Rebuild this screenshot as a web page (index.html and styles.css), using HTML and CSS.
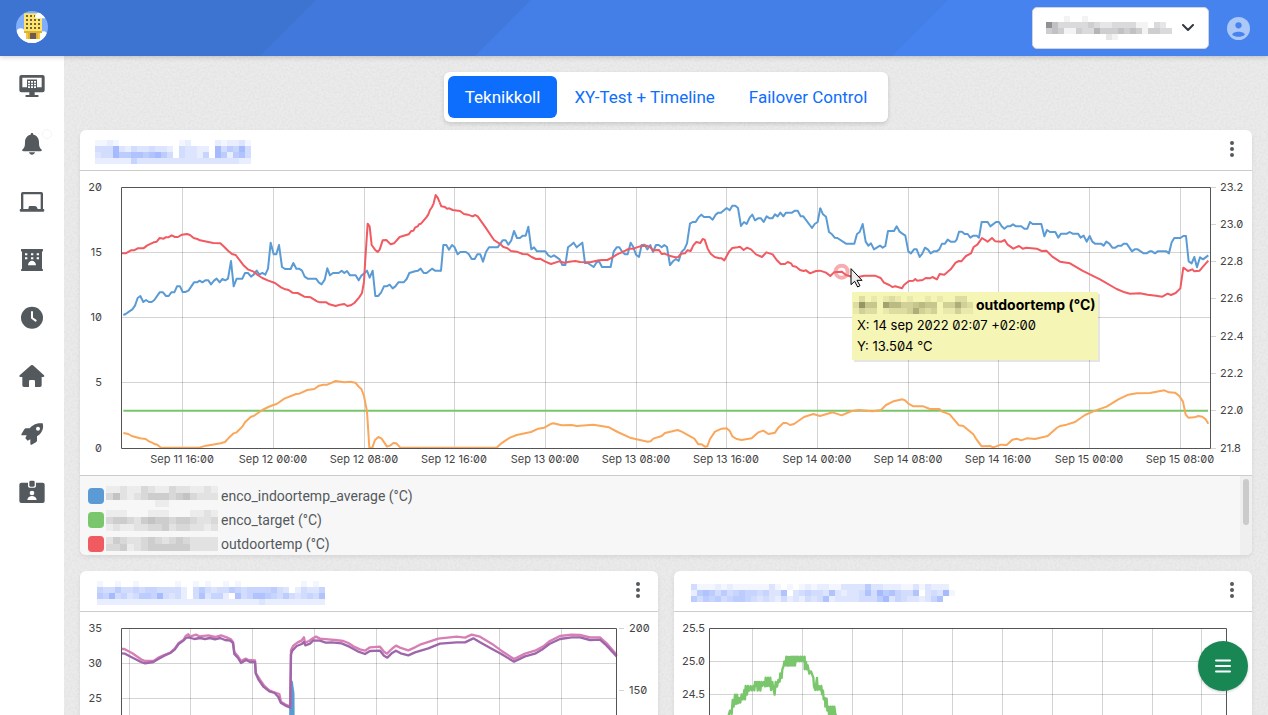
FILE: index.html
```html
<!DOCTYPE html>
<html lang="en">
<head>
<meta charset="utf-8">
<meta name="viewport" content="width=device-width, initial-scale=1">
<title>Teknikkoll</title>
<link rel="stylesheet" href="styles.css">
<script src="script.js" defer></script>
</head>
<body>
<div class="app">
  <header class="topbar">
    <a class="logo" href="#" aria-label="Home">
      <svg viewBox="48 33 96 96"><defs><clipPath id="disc"><circle cx="96" cy="81" r="48"/></clipPath></defs>
        <g clip-path="url(#disc)"><path fill="#80aefb" d="M48 33h96v96H48z"/>
        <g fill="#fff"><circle cx="62" cy="98" r="13"/><circle cx="130" cy="108" r="14"/><circle cx="75" cy="116" r="18"/><circle cx="111" cy="122" r="16"/><path d="M54 106h84v23H54z"/></g>
        <path fill="#ffe566" d="M72 40h54v54H72z"/><path fill="#dfb235" d="M72 93h54v6H72z"/><path fill="#f2c84b" d="M78 99h42v18H78z"/><path fill="#dfb235" d="M84 99h6v18h-6zM108 99h6v18h-6z"/><path fill="#6e5b4c" d="M90 99h18v18H90z"/>
        <path fill="#6b6250" d="M78 45h6v6h-6zM90 45h6v6h-6zM102 45h6v6h-6zM78 57h6v6h-6zM90 57h6v6h-6zM102 57h6v6h-6zM114 57h6v6h-6zM78 69h6v6h-6zM90 69h6v6h-6zM102 69h6v6h-6zM114 69h6v6h-6zM78 81h6v6h-6zM90 81h6v6h-6zM102 81h6v6h-6zM114 81h6v6h-6z"/>
        <path fill="#fff" d="M108 55c-5-4-4-11 2-12l3-5h24v17z"/></g></svg>
    </a>
    <div class="topbar-tools">
      <div class="site-picker">
        <select aria-label="Site"><option></option></select>
        <svg class="mosaic" data-size="6" data-ink="30,30,40" data-rows="000100100000000000000|953333343223333110320|454114336444545414433|000000000021000000000"></svg>
        <svg class="chevron" viewBox="0 0 12 8"><path d="M1 1l5 5 5-5"/></svg>
      </div>
      <button class="account" type="button" aria-label="Account"><svg viewBox="0 0 22 22"><circle class="account-disc" cx="11" cy="11" r="11"/><circle cx="11" cy="8" r="3"/><path d="M5 17c0-4 12-4 12 0-3 2.600-9 2.600-12 0z"/></svg></button>
    </div>
  </header>
  <div class="shell">
    <nav class="sidebar" aria-label="Main">
      <a href="#" aria-label="Overview"><svg viewBox="57 219 78 78"><path fill-rule="evenodd" d="M64 225h64q6 0 6 6v40q0 6-6 6h-24v8h9q3 0 3 3t-3 3H79q-3 0-3-3t3-3h9v-8H64q-6 0-6-6v-40q0-6 6-6zm3 8v29h14v-23h30v23h14v-29z"/><path d="M81 239h30v28H81z"/><path fill="#fff" d="M84 243h6v5h-6zM93 243h6v5h-6zM102 243h6v5h-6zM84 251h6v5h-6zM93 251h6v5h-6zM102 251h6v5h-6zM84 259h6v5h-6zM93 259h6v5h-6zM102 259h6v5h-6z"/></svg></a>
      <a href="#" aria-label="Alarms"><svg viewBox="57 390 78 78"><path d="M96 396c3 0 4 2 4 5 10 2 17 10 17 22 0 14 2 17 7 22 3 4 1 6-3 6H71c-4 0-6-2-3-6 5-5 7-8 7-22 0-12 7-20 17-22 0-3 1-5 4-5zM87 454h18c-1 4-5 7-9 7s-8-3-9-7z"/></svg><span class="dot"></span></a>
      <a href="#" aria-label="Devices"><svg viewBox="57 567 78 78"><path fill-rule="evenodd" d="M68 576h56q5 0 5 5v46H63v-46q0-5 5-5zm2 7v44h52v-44z"/><path d="M88 618h16q7 0 9 9h17q3 0 3 4t-3 4H62q-3 0-3-4t3-4h23q1-9 3-9z"/></svg></a>
      <a href="#" aria-label="Buildings"><svg viewBox="57 81 78 78"><path d="M63 88q0-1 2-1h62q2 0 2 2v3q0 2-3 3v51q3 1 3 3v2q0 2-2 2H65q-2 0-2-2v-2q0-2 3-3V95q-3-1-3-3z"/><path fill="#fff" d="M75 100h7v6h-7zM93 100h7v6h-7zM110 100h7v6h-7zM75 112h7v6h-7zM93 112h7v6h-7zM110 112h7v6h-7zM84 136c1-18 23-18 24 0z"/></svg></a>
      <a href="#" aria-label="History"><svg viewBox="57 255 78 78"><circle cx="96" cy="293" r="33"/><path class="cut" d="M96 276v18l11 8"/></svg></a>
      <a href="#" aria-label="Home page"><svg viewBox="57 432 78 78"><path d="M93 439q3-2 6 0l33 30q3 5-3 5h-4v25q0 5-5 5h-15v-17q0-4-4-4H91q-4 0-4 4v17H72q-5 0-5-5v-25h-5q-6 0-3-5z"/></svg></a>
      <a href="#" aria-label="Launch"><svg viewBox="57 605 78 78"><path fill-rule="evenodd" d="M100 618c8-6 18-7 28-6 3 10 1 20-5 28-3 4-7 8-12 11v13c0 3-10 9-16 12-3 1-4 0-4-3v-13l-8 4-7-7 4-9H67c-3 0-4-2-2-5l7-12c2-3 5-4 8-4h9c3-4 7-7 11-9zm14 4a6 6 0 100 12 6 6 0 000-12z"/></svg></a>
      <a href="#" aria-label="Contacts"><svg viewBox="57 782 78 78"><path d="M64 793h64q6 0 6 6v49q0 6-6 6H64q-6 0-6-6v-49q0-6 6-6z"/><path fill="#fff" d="M84 790h24v13q0 5-5 5H89q-5 0-5-5z"/><rect x="88" y="787" width="16" height="18" rx="4"/><circle fill="#fff" cx="96" cy="824" r="7"/><path fill="#fff" d="M82 845c1-16 27-16 28 0z"/></svg></a>
    </nav>
    <main class="content">
      <div class="tabs" role="tablist">
        <button class="tab active" role="tab" type="button" aria-selected="true">Teknikkoll</button>
        <button class="tab" role="tab" type="button">XY-Test + Timeline</button>
        <button class="tab" role="tab" type="button">Failover Control</button>
      </div>
      <section class="card">
        <div class="card-head">
          <svg class="mosaic" data-size="6" data-ink="50,100,250" data-rows="11210000000000120000212231|44483243343320433220846584|34486677678640433250862674|22222253333333333333333322"></svg>
          <button class="more" type="button" aria-label="Chart menu"><svg viewBox="0 0 4 16"><circle cx="2" cy="2" r="2"/><circle cx="2" cy="8" r="2"/><circle cx="2" cy="14" r="2"/></svg></button>
        </div>
        <div class="chart">
          <svg class="plot" viewBox="0 0 1172 304">
            <path class="grid" d="M42 81.500H1130M42 146.500H1130M42 211.500H1130M102.500 16V277M193.500 16V277M284.500 16V277M374.500 16V277M465.500 16V277M556.500 16V277M646.500 16V277M737.500 16V277M828.500 16V277M918.500 16V277M1009.500 16V277M1100.500 16V277M1131 16.500h5M1131 53.500h5M1131 90.500h5M1131 127.500h5M1131 165.500h5M1131 202.500h5M1131 239.500h5M1131 277.500h5"/>
            <g class="series" transform="translate(0 9) scale(.33333)">
              <path class="blue" d="M130 405L137 402 148 394 157 388 165 377 173 354 181 348 190 366 198 360 207 366 215 366 223 360 239 337 249 337 258 348 266 348 274 337 283 337 291 319 300 319 308 336 317 336 326 331 342 307 351 307 359 302 367 307 376 301 385 301 393 313 402 302 410 296 419 307 427 297 436 301 444 296 453 243 461 319 470 296 487 296 495 279 504 279 513 290 521 284 530 272 538 284 547 279 556 284 564 266 572 188 581 223 589 223 597 195 606 261 615 267 632 267 640 249 649 266 657 266 666 272 674 290 683 296 708 296 717 308 725 313 734 299 742 265 750 286 759 279 776 279 785 272 793 279 801 273 810 286 827 286 836 301 844 287 852 281 861 272 869 293 878 272 886 348 895 348 903 338 912 319 920 319 929 314 938 325 946 319 955 307 971 307 980 297 988 279 1005 274 1014 272 1022 266 1031 279 1040 279 1056 266 1065 272 1082 272"/>
              <path class="blue" transform="translate(1080 0)" d="M0 272L3 272 10 195 19 195 27 209 36 195 44 202 53 223 61 216 78 216 86 222 95 237 104 237 112 223 121 223 129 245 138 216 147 202 173 202 188 181 197 181 205 194 214 181 222 153 231 174 240 174 248 167 257 167 265 140 274 208 282 202 291 214 316 214 325 226 333 231 342 226 359 238 367 255 376 255 384 202 393 195 401 188 410 202 427 188 435 249 443 249 461 261 469 248 477 244 486 261 512 261 521 215 530 202 538 202 547 216 555 223 563 223 572 188 580 201 588 224 597 231 605 195 614 194 622 208 631 195 639 216 648 195 656 195 665 202 673 195 681 201 690 255 699 244 708 237 716 243 725 215 733 208 741 190 750 131 758 126 767 126 775 113 784 104 792 111 809 111 818 119 827 104 835 98 843 98 860 84 869 91 877 77 886 77 894 84 903 138 912 126 920 132 929 113 937 104 945 121 954 115 963 115 971 126 980 109 989 115 997 115 1005 103 1013 109 1021 98 1030 109 1038 98 1056 98 1065 92 1073 92 1082 109 1090 109 1116 144 1124 132 1133 126 1141 84"/>
              <path class="blue" transform="translate(2220 0)" d="M0 83L9 103 18 110 27 156 36 163 44 173 52 174 78 191 103 191 111 162 119 156 128 132 137 185 145 197 153 190 162 208 180 197 188 203 196 198 204 153 222 153 230 139 239 155 247 161 256 167 265 214 273 220 282 208 290 208 299 231 307 221 315 203 324 209 332 220 341 214 350 214 358 208 366 191 375 191 383 179 392 185 405 185 410 179 417 155 426 155 434 162 443 162 451 173 460 167 470 167 477 173 485 126 503 126 511 139 528 126 537 126 545 139 553 146 562 139 570 139 579 133 588 139 604 139 613 146 622 146 630 126 638 132 664 132 673 169 681 150 690 156 706 156 715 173 723 161 741 161 749 156 758 161 774 161 782 173 791 167 800 185 809 168 817 185 825 191 843 191 851 197 859 185 868 191 877 203 886 203 895 197 904 197 911 191 920 191 936 214 944 208 953 208 971 220 980 220 989 214 996 214 1005 220 1013 214 1039 214 1047 220 1055 187 1063 174 1081 174 1090 168 1098 168 1106 244 1115 250 1123 231 1131 262 1140 232 1149 238 1165 226"/>
              <path class="green" d="M130 692H3384"/>
              <path class="red" d="M125 220L137 220 153 211 162 211 173 205 190 205 202 196 221 187 230 185 239 174 251 176 257 172 265 172 275 166 285 171 294 171 306 164 321 162 330 165 341 174 352 177 360 181 385 186 400 189 421 190 433 201 445 213 456 222 467 225 480 242 489 254 505 269 521 275 533 285 547 294 565 302 585 309 603 322 616 328 626 330 637 338 653 339 673 350 692 352 711 364 720 367 739 367 748 373 767 378 780 374 793 372 802 378 812 376 823 369 837 353 846 339 852 305 856 237 863 131 869 140 875 195 885 209 893 216 899 209 908 181 919 180 932 193 942 190 959 171 986 163 994 153 1000 152 1006 142 1013 139 1018 132 1023 131 1039 112 1045 103 1050 90 1056 81 1061 70 1067 45 1073 53 1079 67"/>
              <path class="red" transform="translate(1080 0)" d="M-1 67L4 79 15 81 21 86 28 85 38 90 60 93 72 102 84 104 98 109 106 105 113 109 137 143 162 180 182 193 190 201 201 204 213 213 230 215 248 222 263 223 275 231 288 237 300 236 316 245 333 252 357 244 373 248 388 245 406 243 420 246 450 247 477 241 492 240 502 240 516 233 530 224 556 212 567 206 580 206 600 199 619 197 629 200 639 211 657 210 665 222 673 221 688 227 706 232 715 231 723 221 735 220 742 211 752 213 760 196 769 186 781 189 788 177 794 179 803 206 812 221 824 231 838 235 845 235 853 241 859 230 867 215 877 204 893 202 900 200 911 210 921 203 933 208 948 223 966 231 979 217 998 223 1010 240 1022 252 1035 252 1043 246 1053 250 1058 258 1068 260 1080 270 1091 273 1098 271 1110 280 1128 273 1140 272"/>
              <path class="red" transform="translate(2220 0)" d="M0 272L18 278 31 288 42 277 65 275 78 285 95 290 110 292 133 287 165 287 182 294 192 308 208 315 217 321 226 319 246 325 252 315 267 303 280 302 286 297 291 302 308 300 317 294 330 295 337 291 351 298 359 282 373 284 392 268 407 248 417 243 424 244 438 228 453 220 461 201 472 194 479 184 486 174 503 185 516 174 526 184 544 185 554 180 563 194 580 206 597 198 608 206 619 203 650 206 665 213 679 212 697 230 720 245 750 250 787 272 840 298 890 327 914 337 930 341 960 340 983 344 1008 347 1027 350 1043 341 1053 345 1067 339 1081 325 1090 263 1104 273 1117 268 1123 274 1139 272 1149 260 1165 242"/>
              <path class="orange" d="M130 759L145 762 155 768 180 775 197 777 207 784 215 787 223 792 232 794 243 803 358 803 378 797 397 794 422 790 435 786 445 775 461 760 470 757 487 740 495 727 513 710 521 708 547 690 565 681 580 675 590 672 613 656 648 642 658 641 682 630 703 627 717 617 730 614 742 614 767 603 793 607 812 605 826 608 837 621 844 627 852 648 861 694 868 803 877 803 885 780 895 771 905 776 921 800 930 797 940 789 949 790 961 803 1250 803 1264 790 1277 781 1290 773 1310 765 1353 756 1375 746 1393 743 1414 731 1420 730 1445 736 1475 735 1490 738 1540 734 1587 742 1613 756 1650 773 1703 785 1712 784 1720 776 1745 768 1755 759 1793 750 1805 755 1843 776 1855 793 1865 793 1875 800 1882 799 1890 777 1905 755 1925 746 1940 745 1950 754 1957 769 1970 777 1985 780 2015 775 2035 757 2050 752 2065 762 2085 758 2095 743 2110 729 2120 729 2130 735 2142 732 2172 711 2200 702 2220 708 2258 697 2285 706 2315 693 2337 690 2377 694 2403 690 2418 675 2440 664 2468 658 2475 661 2485 671 2500 679 2530 679 2550 687 2578 687 2585 694 2609 703 2637 736 2650 738 2680 763 2690 779 2705 799 2730 798 2740 802 2763 794 2780 795 2797 779 2810 776 2824 781 2840 775 2865 777 2903 768 2930 744 2940 738 2960 734 2985 726 3015 705 3045 692 3080 680 3115 658 3145 644 3170 640 3210 639 3253 631 3267 637 3285 638 3298 648 3309 665 3317 704 3325 713 3343 712 3355 708 3367 710 3377 718 3385 731"/>
              <circle class="hover-ring" cx="2285" cy="275" r="18"/>
            </g>
            <path class="frame" d="M41.500 16.500H1130.500V277.500H41.500z"/>
            <g class="axis" text-anchor="end"><text x="22" y="20">20</text><text x="22" y="85">15</text><text x="22" y="150">10</text><text x="22" y="215">5</text><text x="22" y="281">0</text></g>
            <g class="axis"><text x="1140" y="20">23.2</text><text x="1140" y="57">23.0</text><text x="1140" y="94">22.8</text><text x="1140" y="131">22.6</text><text x="1140" y="169">22.4</text><text x="1140" y="206">22.2</text><text x="1140" y="243">22.0</text><text x="1140" y="281">21.8</text></g>
            <g class="axis" text-anchor="middle"><text x="102" y="292">Sep 11 16:00</text><text x="193" y="292">Sep 12 00:00</text><text x="284" y="292">Sep 12 08:00</text><text x="374" y="292">Sep 12 16:00</text><text x="465" y="292">Sep 13 00:00</text><text x="556" y="292">Sep 13 08:00</text><text x="646" y="292">Sep 13 16:00</text><text x="737" y="292">Sep 14 00:00</text><text x="828" y="292">Sep 14 08:00</text><text x="918" y="292">Sep 14 16:00</text><text x="1009" y="292">Sep 15 00:00</text><text x="1100" y="292">Sep 15 08:00</text></g>
          </svg>
          <div class="tooltip">
            <div class="tooltip-name"><svg class="mosaic" data-size="6" data-ink="30,30,0" data-rows="02010121010010100220|28440755334544033632|13220122236323011311"></svg><strong>outdoortemp (°C)</strong></div>
            <div>X: 14 sep 2022 02:07 +02:00</div>
            <div>Y: 13.504 °C</div>
          </div>
          <svg class="pointer" viewBox="91 261 39 63"><path d="M94 266v48l11-10 9 17 7-4-9-16h15z"/></svg>
        </div>
        <ul class="legend">
          <li><span class="swatch swatch-blue"></span><svg class="mosaic" data-size="7" data-ink="60,60,60" data-rows="1121132113221121|3521234443453222|0000000110000000"></svg>enco_indoortemp_average (°C)</li>
          <li><span class="swatch swatch-green"></span><svg class="mosaic" data-size="7" data-ink="60,60,60" data-rows="1110001110001121|3443245443443223|1211223342332212"></svg>enco_target (°C)</li>
          <li><span class="swatch swatch-red"></span><svg class="mosaic" data-size="7" data-ink="60,60,60" data-rows="2432234323432222|3341234444442222"></svg>outdoortemp (°C)</li>
        </ul>
      </section>
      <div class="card-row">
        <section class="card">
          <div class="card-head">
            <svg class="mosaic" data-size="6" data-ink="50,100,250" data-rows="10010010000001001010010100000000001010|54464454554444204643446545555643024335|65845346658434204735520745776546434547|22222222222222222222222222232222222222"></svg>
            <button class="more" type="button" aria-label="Chart menu"><svg viewBox="0 0 4 16"><circle cx="2" cy="2" r="2"/><circle cx="2" cy="8" r="2"/><circle cx="2" cy="14" r="2"/></svg></button>
          </div>
          <div class="chart">
            <svg class="plot" viewBox="0 0 578 200">
              <path class="grid" d="M42 51.500H536M42 86.500H536M42 121.500H536M42 156.500H536M49.500 16V184M110.500 16V184M172.500 16V184M234.500 16V184M296.500 16V184M357.500 16V184M419.500 16V184M481.500 16V184M539 16.500h5M539 78.500h5"/>
              <g class="series thick" transform="translate(0 -2) scale(.33333)">
                <path class="bar" d="M631 600V290L635 215 640 250 642 600z"/>
                <path class="pink" d="M125 117L133 117 157 130 183 148 195 153 222 152 237 142 252 135 271 128 284 116 296 99 311 89 318 77 325 73 330 80 348 74 358 79 385 76 405 81 423 76 440 82 453 88 459 96 463 126 474 139 483 153 497 146 505 150 525 151 528 190 540 209 553 228 568 241 577 245 598 252 603 275 615 283 630 290 633 120 640 107 652 98 664 92 672 82 675 98 687 93 700 84 708 80 720 86 744 88 765 90 790 93 805 99 820 109 840 118 855 122 870 112 900 110 912 125 921 131 935 117 948 107 960 113 985 121 1005 112 1020 104 1048 95 1075 86 1130 80 1155 83 1175 74 1200 80 1235 101 1264 122 1302 147 1335 131 1365 122 1390 109 1408 94 1440 78 1475 74 1500 75 1530 82 1560 82 1580 100 1610 134"/>
                <path class="purple" d="M125 130L135 131 158 143 183 156 195 160 220 156 235 147 253 137 271 129 284 119 296 102 310 92 318 84 325 82 343 87 360 84 375 87 390 84 405 88 420 84 435 90 451 92 459 99 463 132 474 144 483 159 498 150 510 156 525 156 527 190 535 208 550 230 568 244 584 249 595 261 602 278 615 286 631 293 633 133 637 122 650 108 665 102 672 96 676 106 690 101 700 91 720 92 737 98 755 97 785 100 808 110 833 124 855 132 870 123 900 122 912 137 922 143 935 130 948 122 962 130 985 136 1005 127 1045 115 1080 101 1130 97 1155 97 1180 85 1200 97 1235 116 1264 132 1302 155 1335 139 1365 131 1390 116 1408 102 1440 87 1475 82 1500 82 1530 90 1560 89 1580 107 1610 139"/>
              </g>
              <path class="frame" d="M41.500 16.500H536.500V184.500H41.500z"/>
              <g class="axis" text-anchor="end"><text x="22" y="20">35</text><text x="22" y="55">30</text><text x="22" y="90">25</text></g>
              <g class="axis"><text x="549" y="20">200</text><text x="549" y="82">150</text></g>
            </svg>
          </div>
        </section>
        <section class="card">
          <div class="card-head">
            <svg class="mosaic" data-size="6" data-ink="50,100,250" data-rows="41112121111113101012122113333633222113132220|26764645655453370345443732334748675447034381|64656456654343242324347233334446835433235700"></svg>
            <button class="more" type="button" aria-label="Chart menu"><svg viewBox="0 0 4 16"><circle cx="2" cy="2" r="2"/><circle cx="2" cy="8" r="2"/><circle cx="2" cy="14" r="2"/></svg></button>
          </div>
          <div class="chart">
            <svg class="plot" viewBox="0 0 578 200">
              <path class="grid" d="M36 49.500H552M36 82.500H552M36 115.500H552M36 148.500H552M78.500 16V184M128.500 16V184M178.500 16V184M228.500 16V184M278.500 16V184M328.500 16V184M378.500 16V184M428.500 16V184M478.500 16V184M527.500 16V184"/>
              <g class="series thick" transform="translate(-34 -52) scale(.33333)">
                <path class="green" d="M245 620L262 480 267 462 270 452 275 462 278 420 281 440 285 404 288 432 291 404 294 430 297 414 301 428 305 403 309 418 313 390 315 418 317 378 321 404 324 378 328 392 332 378 336 391 340 378 343 391 345 366 348 378 351 366 353 392 357 366 361 392 364 366 366 378 371 366 375 379 377 353 381 378 384 353 388 378 391 353 393 390 397 366 401 390 404 404 407 366 411 380 415 360 419 365 421 340 425 354 427 328 431 318 433 304 437 316 439 290 442 317 445 291 447 317 450 291 453 317 456 290 459 317 462 290 465 317 468 290 471 304 474 290 478 304 481 290 484 304 487 290 491 304 494 290 494 328 498 306 501 328 503 316 508 341 513 334 520 353 522 380 526 390 531 354 533 390 537 378 541 390 544 378 546 403 549 392 551 418 555 414 556 440 560 416 562 452 565 440 567 463 571 440 573 464 577 440 580 464 583 440 586 463 600 480 640 600"/>
              </g>
              <path class="frame" d="M35.500 16.500H552.500V184.500H35.500z"/>
              <g class="axis" text-anchor="end"><text x="31" y="20">25.5</text><text x="31" y="53">25.0</text><text x="31" y="86">24.5</text></g>
            </svg>
          </div>
        </section>
      </div>
    </main>
  </div>
  <button class="fab" type="button" aria-label="Menu"><svg viewBox="0 0 16 14"><path d="M1 1.500h14M1 7h14M1 12.500h14"/></svg></button>
</div>
</body>
</html>
```
FILE: styles.css
```css
* { box-sizing: border-box; }
body {
  margin: 0;
  font-family: Inter, "Noto Sans", sans-serif;
  font-feature-settings: "zero";
  font-size: 14px;
  color: #444;
}
button { border: 0; padding: 0; background: none; font: inherit; font-feature-settings: inherit; cursor: pointer; }
svg { display: block; }
.app { display: flex; flex-direction: column; height: 100vh; }

.topbar {
  position: relative;
  z-index: 2;
  flex: none;
  display: flex;
  align-items: center;
  justify-content: space-between;
  height: 56px;
  padding: 0 18px 0 16px;
  background: linear-gradient(135deg, #3d74d1 223px, #4078dc 224px, #4078dc 375px, #447fe8 376px, #447fe8 670px, #4783ee 671px);
  box-shadow: 0 1px 5px rgba(0, 0, 0, .2);
}
.logo { padding-bottom: 2px; }
.logo svg { width: 32px; height: 32px; }
.topbar-tools { display: flex; align-items: center; gap: 18px; }
.site-picker { position: relative; }
.site-picker select {
  display: block;
  appearance: none;
  width: 177px;
  height: 42px;
  border: 1px solid #ced4da;
  border-radius: 5px;
  background: #fff;
}
.site-picker svg { position: absolute; pointer-events: none; }
.site-picker .mosaic { left: 14px; top: 9px; }
.chevron { right: 15px; top: 17px; width: 12px; height: 8px; fill: none; stroke: #343a40; stroke-width: 2; stroke-linecap: round; stroke-linejoin: round; }
.account svg { width: 23px; height: 23px; fill: #4783ee; }
.account-disc { fill: #acc8f8; }

.shell { flex: 1; display: flex; min-height: 0; }
.sidebar { flex: none; width: 64px; padding-top: 1px; background: #fff; }
.sidebar a { position: relative; display: flex; align-items: center; justify-content: center; height: 58px; }
.sidebar svg { width: 26px; height: 26px; fill: #54595d; }
.sidebar .cut { fill: none; stroke: #fff; stroke-width: 6; stroke-linecap: round; stroke-linejoin: round; }
.dot { position: absolute; right: 12px; top: 14px; width: 10px; height: 10px; border: 1px solid #f5f5f5; border-radius: 50%; }

.content {
  flex: 1;
  min-width: 0;
  display: flex;
  flex-direction: column;
  padding: 16px;
  overflow-y: auto;
  scrollbar-width: none;
  background: #ebebeb url("data:image/svg+xml,%3Csvg xmlns='http://www.w3.org/2000/svg' width='200' height='200'%3E%3Cfilter id='n'%3E%3CfeTurbulence type='fractalNoise' baseFrequency='.45' numOctaves='3' stitchTiles='stitch'/%3E%3CfeColorMatrix values='0 0 0 0 0 0 0 0 0 0 0 0 0 0 0 .07 0 0 0 -.025'/%3E%3C/filter%3E%3Crect width='200' height='200' filter='url(%23n)'/%3E%3C/svg%3E");
}
.tabs {
  align-self: center;
  flex: none;
  display: flex;
  padding: 4px;
  margin-bottom: 8px;
  border-radius: 6px;
  background: #fff;
  box-shadow: 0 2px 4px rgba(0, 0, 0, .14);
}
.tab { height: 42px; padding: 0 17px; border-radius: 6px; color: #0d6efd; font-family: Roboto, sans-serif; font-size: 17px; white-space: nowrap; }
.tab.active { background: #0d6efd; color: #fff; }

.card { flex: none; border-radius: 6px; background: #fff; box-shadow: 0 2px 4px rgba(0, 0, 0, .08); }
.card-row { display: grid; grid-template-columns: 1fr 1fr; gap: 16px; margin-top: 16px; }
.card-head {
  display: flex;
  align-items: center;
  justify-content: space-between;
  height: 41px;
  padding: 4px 18px 0 15px;
  border-bottom: 1px solid #ccc;
}
.card-row .card-head { padding-left: 17px; }
.more { margin-bottom: 6px; }
.more svg { width: 4px; height: 16px; fill: #54595d; overflow: visible; }

.chart { position: relative; }
.plot { width: 100%; height: auto; }
.grid { fill: none; stroke: #000; stroke-opacity: .17; }
.frame { fill: none; stroke: #545454; }
.axis { font-size: 11px; fill: #444; }
.series path { fill: none; stroke-width: 6; stroke-linejoin: round; }
.series.thick path { stroke-width: 7; }
.series .blue { stroke: #5b9bd5; }
.series .green { stroke: #7ac66c; }
.series .red { stroke: #f15a60; }
.series .orange { stroke: #faa75b; }
.series .pink { stroke: #d77fb3; }
.series .purple { stroke: #9e66ab; }
.series .bar { fill: #5a9bd4; stroke: #5a9bd4; stroke-width: 2; }
.hover-ring { fill: none; stroke: #f15a60; stroke-opacity: .5; stroke-width: 12; }

.tooltip {
  position: absolute;
  left: 772px;
  top: 121px;
  padding: 2px 2px 3px 1px;
  background: #f5f5b5;
  box-shadow: 2px 2px 0 rgba(0, 0, 0, .1);
  color: #000;
  font-size: 13px;
  line-height: 21px;
  white-space: nowrap;
}
.tooltip div { padding-left: 4px; }
.tooltip .tooltip-name { display: flex; align-items: center; gap: 3px; padding-left: 0; font-size: 14px; }
.pointer { position: absolute; left: 770px; top: 96px; width: 13px; height: 21px; fill: #eee; stroke: #000; stroke-width: 3; }

.legend {
  position: relative;
  height: 80px;
  margin: 0;
  padding: 8px;
  list-style: none;
  overflow: hidden;
  border-top: 1px solid #ccc;
  border-radius: 0 0 6px 6px;
  background: #f7f7f7;
}
.legend::before { content: ""; position: absolute; right: 0; top: 0; bottom: 0; width: 12px; background: #efefef; }
.legend::after { content: ""; position: absolute; right: 3px; top: 3px; width: 6px; height: 46px; border-radius: 3px; background: #cbcbcb; }
.legend li { display: flex; align-items: center; height: 24px; color: #54595d; font-family: Roboto, sans-serif; font-size: 14px; }
.legend .mosaic { margin: 0 3px 0 2px; }
.swatch { width: 16px; height: 16px; border-radius: 4px; }
.swatch-blue { background: #5b9bd5; }
.swatch-green { background: #7ac66c; }
.swatch-red { background: #f15a60; }

.fab {
  position: fixed;
  z-index: 3;
  right: 20px;
  bottom: 24px;
  display: flex;
  align-items: center;
  justify-content: center;
  width: 50px;
  height: 50px;
  border-radius: 50%;
  background: #198754;
  box-shadow: 0 1px 3px rgba(0, 0, 0, .2);
}
.fab svg { width: 16px; height: 14px; stroke: #fff; stroke-width: 2; stroke-linecap: round; }
```
FILE: script.js
```js
// Fills each redacted label with a grid of tinted squares, one digit per cell.
const NS = "http://www.w3.org/2000/svg";
document.querySelectorAll(".mosaic").forEach((svg) => {
  const size = Number(svg.dataset.size);
  const rows = svg.dataset.rows.split("|");
  svg.setAttribute("width", rows[0].length * size);
  svg.setAttribute("height", rows.length * size);
  svg.setAttribute("aria-hidden", "true");
  rows.forEach((row, y) => {
    [...row].forEach((level, x) => {
      if (level === "0") return;
      const cell = document.createElementNS(NS, "rect");
      cell.setAttribute("x", x * size);
      cell.setAttribute("y", y * size);
      cell.setAttribute("width", size);
      cell.setAttribute("height", size);
      cell.setAttribute("fill", `rgba(${svg.dataset.ink},${level * 0.055})`);
      svg.append(cell);
    });
  });
});
```
